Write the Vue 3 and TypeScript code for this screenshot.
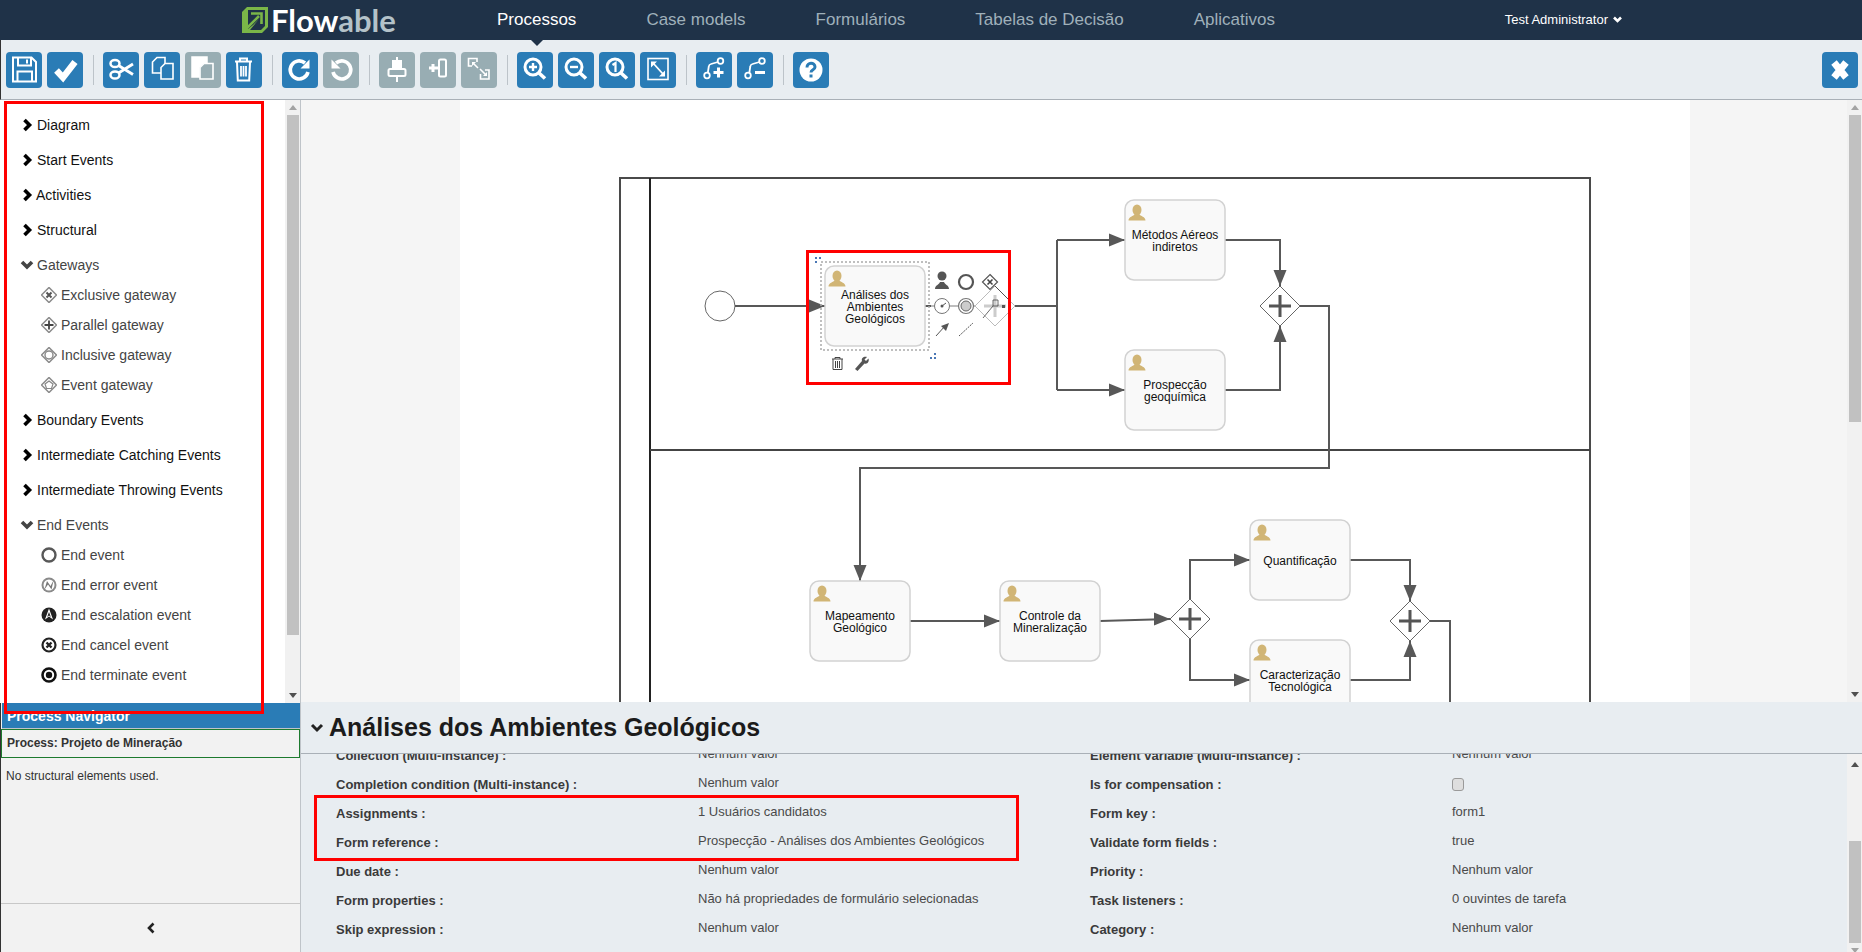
<script setup lang="ts">
interface ToolButton {
  icon: string
  disabled?: boolean
}

const icons: Record<string, string> = {
  save: '<path d="M7 5.500h18.500L30 10v19.500H7z" stroke-width="2"/><path d="M12 6v7.500h13V6M21 7.500v4M11.500 30V19.500H26V30" stroke-width="2"/>',
  check: '<path d="M9.500 18.500l6.500 7 12-15.500" stroke-width="6.500"/>',
  cut: '<ellipse cx="12" cy="11.500" rx="4.500" ry="3.600" stroke-width="2.500"/><ellipse cx="12" cy="23" rx="4.500" ry="3.600" stroke-width="2.500"/><path d="M15.500 13.500L30 22.500M15.500 21L30 12" stroke-width="2.800"/>',
  copy: '<path d="M8.500 21V10l4.500-4.500h8V21z" stroke-width="1.600"/><path d="M17 15.500l4-4h8V27H17z" fill="#2a7cb6" stroke-width="1.600"/>',
  paste: '<path d="M7 5h15v6h-4l-4 4v10H7z" fill="#fff"/><path d="M15 15.500l4-4h9V27H15z" fill="#98adb3" stroke-width="1.600"/>',
  trash: '<path d="M9 9.500h17M14 9V6.500h7V9" stroke-width="2"/><path d="M11 10l.800 18.500h11.400L24 10" stroke-width="2"/><path d="M15 14v10.500M17.500 14v10.500M20 14v10.500" stroke-width="1.800"/>',
  redo: '<path d="M26 20a9 9 0 1 1-3-9" stroke-width="3.600"/><path d="M27.500 7.500v9h-9z" fill="#fff" stroke="none"/>',
  undo: '<path d="M10 20a9 9 0 1 0 3-9" stroke-width="3.600"/><path d="M8.500 7.500v9h9z" fill="#fff" stroke="none"/>',
  alignv: '<path d="M18 5v25" stroke-width="2"/><rect x="14" y="9" width="8" height="6" fill="#fff" stroke-width="2"/><rect x="9.500" y="17" width="17" height="7" rx="1.500" fill="#98adb3" stroke-width="2"/>',
  alignh: '<path d="M9 16h9M13 12v8" stroke-width="3"/><rect x="19" y="7.500" width="7" height="17" rx="1.500" stroke-width="2"/>',
  size: '<path d="M16 10V6.500H7.500V14H11M19.500 22v5h8.500v-9h-4" stroke-width="1.600"/><path d="M12 11l5 5M19 17l6 6" stroke-width="1.600"/><path d="M11 10h4l-4 4zM26 24h-4l4-4z" fill="#fff" stroke="none"/>',
  zoomin: '<circle cx="16" cy="15" r="8" stroke-width="3"/><path d="M22 21l6 5.500" stroke-width="3.600"/><path d="M12 15h8M16 11v8" stroke-width="2.400"/>',
  zoomout: '<circle cx="16" cy="15" r="8" stroke-width="3"/><path d="M22 21l6 5.500" stroke-width="3.600"/><path d="M12 15h8" stroke-width="2.400"/>',
  zoomone: '<circle cx="16" cy="15" r="8" stroke-width="3"/><path d="M22 21l6 5.500" stroke-width="3.600"/><path d="M13.500 13l3-2v9" stroke-width="2.200"/>',
  fit: '<rect x="8" y="6.500" width="20" height="21" stroke-width="1.600"/><path d="M13 11l10 11" stroke-width="1.800"/><path d="M11 9.500h6l-6 6zM25 24.500h-6l6-6z" fill="#fff" stroke="none"/>',
  bendadd: '<circle cx="24.500" cy="9" r="2.800" stroke-width="1.800"/><circle cx="11" cy="23.500" r="2.800" stroke-width="1.800"/><path d="M22 10l-7 2q-2 .5-2.200 2.500l-1 6.500" stroke-width="1.800"/><path d="M17.500 20.500h10M22.500 15.500v10" stroke-width="3"/>',
  bendremove: '<circle cx="25" cy="9" r="2.800" stroke-width="1.800"/><circle cx="11" cy="23.500" r="2.800" stroke-width="1.800"/><path d="M22.500 10l-7 2q-2 .5-2.200 2.500l-1 6.500" stroke-width="1.800"/><path d="M18 20.500h10" stroke-width="3"/>',
  help: '<circle cx="18" cy="18" r="11.500" fill="#fff" stroke="none"/><path d="M14 15.500c0-5.500 8-5.500 8-.5 0 3-4 2.500-4 5.500" stroke="#2a7cb6" stroke-width="3"/><path d="M18 22.500v3" stroke="#2a7cb6" stroke-width="3"/>',
  close: '<path d="M12 10.500l12 15M24 10.500l-12 15" stroke-width="7"/>',
}

const toolGroups: ToolButton[][] = [
  [{ icon: 'save' }, { icon: 'check' }],
  [{ icon: 'cut' }, { icon: 'copy' }, { icon: 'paste', disabled: true }, { icon: 'trash' }],
  [{ icon: 'redo' }, { icon: 'undo', disabled: true }],
  [{ icon: 'alignv', disabled: true }, { icon: 'alignh', disabled: true }, { icon: 'size', disabled: true }],
  [{ icon: 'zoomin' }, { icon: 'zoomout' }, { icon: 'zoomone' }, { icon: 'fit' }],
  [{ icon: 'bendadd' }, { icon: 'bendremove' }],
  [{ icon: 'help' }],
]

const navLinks = ['Processos', 'Case models', 'Formulários', 'Tabelas de Decisão', 'Aplicativos']

const diamond = '<path d="M8 .500l7.500 7.500L8 15.500.500 8z" fill="#fff" stroke="#8a8a8a" stroke-width="1.500"/>'
const palette = [
  { name: 'Diagram', items: [] },
  { name: 'Start Events', items: [] },
  { name: 'Activities', items: [] },
  { name: 'Structural', items: [] },
  {
    name: 'Gateways',
    open: true,
    items: [
      { name: 'Exclusive gateway', icon: diamond + '<path d="M5.500 5.500l5 5M10.500 5.500l-5 5" stroke="#555" stroke-width="2"/>' },
      { name: 'Parallel gateway', icon: diamond + '<path d="M8 3.500v9M3.500 8h9" stroke="#444" stroke-width="1.800"/>' },
      { name: 'Inclusive gateway', icon: diamond + '<circle cx="8" cy="8" r="4" fill="none" stroke="#888" stroke-width="1.400"/>' },
      { name: 'Event gateway', icon: diamond + '<path d="M8 4l4 3-1.500 4.500h-5L4 7z" fill="none" stroke="#888" stroke-width="1.200"/>' },
    ],
  },
  { name: 'Boundary Events', items: [] },
  { name: 'Intermediate Catching Events', items: [] },
  { name: 'Intermediate Throwing Events', items: [] },
  {
    name: 'End Events',
    open: true,
    items: [
      { name: 'End event', icon: '<circle cx="8" cy="8" r="6.500" fill="none" stroke="#585858" stroke-width="2.400"/>' },
      { name: 'End error event', icon: '<circle cx="8" cy="8" r="7.500" fill="#8a8a8a"/><circle cx="8" cy="8" r="5.500" fill="#fff"/><path d="M3.500 12.500l2.500-8.500 3.500 5L12.500 3.500l-2 9-3.500-5z" fill="#777"/>' },
      { name: 'End escalation event', icon: '<circle cx="8" cy="8" r="7.500" fill="#222"/><path d="M8 1.500l4 11-4-3-4 3z" fill="#fff"/><path d="M8 5l1.800 5L8 8.500 6.200 10z" fill="#222"/>' },
      { name: 'End cancel event', icon: '<circle cx="8" cy="8" r="6.500" fill="#fff" stroke="#222" stroke-width="2.200"/><path d="M5.500 5.500l5 5M10.500 5.500l-5 5" stroke="#222" stroke-width="2.400"/>' },
      { name: 'End terminate event', icon: '<circle cx="8" cy="8" r="6.500" fill="#fff" stroke="#111" stroke-width="2.600"/><circle cx="8" cy="8" r="3.200" fill="#111"/>' },
    ],
  },
]

const rows = [
  ['Collection (Multi-instance) :', 'Nenhum valor', 'Element variable (Multi-instance) :', 'Nenhum valor'],
  ['Completion condition (Multi-instance) :', 'Nenhum valor', 'Is for compensation :', ''],
  ['Assignments :', '1 Usuários candidatos', 'Form key :', 'form1'],
  ['Form reference :', 'Prospecção - Análises dos Ambientes Geológicos', 'Validate form fields :', 'true'],
  ['Due date :', 'Nenhum valor', 'Priority :', 'Nenhum valor'],
  ['Form properties :', 'Não há propriedades de formulário selecionadas', 'Task listeners :', '0 ouvintes de tarefa'],
  ['Skip expression :', 'Nenhum valor', 'Category :', 'Nenhum valor'],
]

const tasks = [
  { x: 825, y: 266, lines: ['Análises dos', 'Ambientes', 'Geológicos'], top: 29 },
  { x: 1125, y: 200, lines: ['Métodos Aéreos', 'indiretos'], top: 35 },
  { x: 1125, y: 350, lines: ['Prospecção', 'geoquímica'], top: 35 },
  { x: 810, y: 581, lines: ['Mapeamento', 'Geológico'], top: 35 },
  { x: 1000, y: 581, lines: ['Controle da', 'Mineralização'], top: 35 },
  { x: 1250, y: 520, lines: ['Quantificação'], top: 41 },
  { x: 1250, y: 640, lines: ['Caracterização', 'Tecnológica'], top: 35 },
]

const gateways = [
  { x: 1280, y: 306 },
  { x: 1190, y: 619 },
  { x: 1410, y: 621 },
]

const flows = [
  '735,306 825,306',
  '1015,306 1057,306',
  '1057,240 1057,390',
  '1057,240 1125,240',
  '1057,390 1125,390',
  '1225,240 1280,240 1280,286',
  '1225,390 1280,390 1280,326',
  '1300,306 1329,306 1329,468 860,468 860,581',
  '910,621 1000,621',
  '1100,621 1170,619',
  '1190,599 1190,560 1250,560',
  '1190,639 1190,680 1250,680',
  '1350,560 1410,560 1410,601',
  '1350,680 1410,680 1410,641',
  '1430,621 1450,621 1450,702',
]

// arrow heads: tip position, direction
const arrows: [number, number, string][] = [
  [825, 306, 'r'], [1125, 240, 'r'], [1125, 390, 'r'], [1280, 286, 'd'], [1280, 326, 'u'],
  [860, 581, 'd'], [1000, 621, 'r'], [1170, 619, 'r'], [1250, 560, 'r'], [1250, 680, 'r'],
  [1410, 601, 'd'], [1410, 641, 'u'],
]

function arrowPoints(a: [number, number, string]): string {
  const [x, y, dir] = a
  if (dir === 'r') return `${x},${y} ${x - 16},${y - 6.5} ${x - 16},${y + 6.5}`
  if (dir === 'd') return `${x},${y} ${x - 6.5},${y - 16} ${x + 6.5},${y - 16}`
  return `${x},${y} ${x - 6.5},${y + 16} ${x + 6.5},${y + 16}`
}

function diamondPoints(x: number, y: number, r = 20): string {
  return `${x},${y - r} ${x + r},${y} ${x},${y + r} ${x - r},${y}`
}
</script>

<template>
  <div class="app">
    <header class="topbar">
      <svg class="logo-icon" width="26" height="26" viewBox="0 0 26 26">
        <path d="M5 0h21v20l-6 6H0V5z" fill="#7ab648" />
        <path d="M6 3h17v16l-4 4H8l9-11-6 6-5 4z" fill="#1f3248" />
        <path d="M5 21L17 9M9 6.500h10.500V17" fill="none" stroke="#7ab648" stroke-width="2.600" />
      </svg>
      <span class="logo-text">Flow<span class="logo-soft">able</span></span>
      <nav class="nav">
        <a v-for="(link, i) in navLinks" :key="link" class="nav-link" :class="{ active: i === 0 }">{{ link }}</a>
      </nav>
      <span class="user">
        Test Administrator
        <svg width="9" height="7" viewBox="0 0 9 7"><path d="M1 1.500l3.500 3.500L8 1.500" fill="none" stroke="#fff" stroke-width="2.600" /></svg>
      </span>
    </header>
    <div class="nav-pointer"></div>

    <div class="toolbar">
      <template v-for="(group, g) in toolGroups" :key="g">
        <span v-if="g > 0" class="sep"></span>
        <button v-for="b in group" :key="b.icon" class="tool" :class="{ off: b.disabled }">
          <svg width="36" height="36" viewBox="0 0 36 36" fill="none" stroke="#fff" stroke-width="1.500" v-html="icons[b.icon]"></svg>
        </button>
      </template>
      <button class="tool close">
        <svg width="36" height="36" viewBox="0 0 36 36" fill="none" stroke="#fff" v-html="icons.close"></svg>
      </button>
    </div>

    <div class="main">
      <aside class="side">
        <div class="palette">
          <ul class="groups">
            <li v-for="group in palette" :key="group.name">
              <div class="group" :class="{ open: group.open, tight: group.name === 'Activities' }">
                <svg width="14" height="14" viewBox="0 0 14 14" fill="none" :stroke="group.open ? '#444' : '#000'" stroke-width="3.600">
                  <path v-if="group.open" d="M2 4l5 5 5-5" />
                  <path v-else d="M4.500 2l5 5-5 5" />
                </svg>
                {{ group.name }}
              </div>
              <div v-for="item in group.items" :key="item.name" class="item">
                <svg width="16" height="16" viewBox="0 0 16 16" v-html="item.icon"></svg>
                {{ item.name }}
              </div>
            </li>
          </ul>
          <div class="scrollbar palette-bar">
            <span class="arr up"></span>
            <div class="track"><div class="thumb"></div></div>
            <span class="arr down"></span>
          </div>
        </div>
        <div class="navigator">
          <div class="nav-title">Process Navigator</div>
          <div class="nav-process">Process: Projeto de Mineração</div>
          <div class="nav-empty">No structural elements used.</div>
          <div class="nav-footer">
            <svg width="12" height="12" viewBox="0 0 12 12"><path d="M8.500 1.500L4 6l4.500 4.500" fill="none" stroke="#222" stroke-width="2.600" /></svg>
          </div>
        </div>
      </aside>

      <div class="work">
        <div class="canvas">
          <svg class="diagram" width="1546" height="602" viewBox="301 100 1546 602">
            <rect x="460" y="100" width="1230" height="602" fill="#fff" />

            <!-- pool and lanes -->
            <path d="M620 702V178H1590V702" fill="none" stroke="#4a4a4a" stroke-width="2" />
            <path d="M650 178V702" stroke="#222" stroke-width="2" />
            <path d="M650 450H1590" stroke="#444" stroke-width="2" />

            <circle cx="720" cy="306" r="15" fill="#fff" stroke="#666" />

            <polyline v-for="f in flows" :key="f" :points="f" fill="none" stroke="#585858" stroke-width="2" />
            <polygon v-for="(a, i) in arrows" :key="i" :points="arrowPoints(a)" fill="#585858" />
            <path d="M925 306h6" stroke="#585858" stroke-width="2" />
            <path d="M931 306h44" stroke="#bdbdbd" stroke-width="2" />

            <g v-for="g in gateways" :key="g.x">
              <polygon :points="diamondPoints(g.x, g.y)" fill="#fff" stroke="#666" />
              <path :d="`M${g.x - 11} ${g.y}h22M${g.x} ${g.y - 11}v22`" stroke="#555" stroke-width="3" />
            </g>

            <g v-for="t in tasks" :key="t.x + '-' + t.y">
              <rect :x="t.x" :y="t.y" width="100" height="80" rx="9" fill="#f9f9f9" stroke="#d2d2d2" stroke-width="1.500" />
              <g :transform="`translate(${t.x + 3.5} ${t.y + 4.5})`" fill="#d1b575">
                <ellipse cx="8.500" cy="5.500" rx="4.500" ry="5.500" />
                <path d="M0 16c0-4 5-4 6.500-6.500h4C12 12 17 12 17 16z" />
              </g>
              <text v-for="(line, i) in t.lines" :key="line" class="task-label" :x="t.x + 50" :y="t.y + t.top + i * 12 + 4">{{ line }}</text>
            </g>

            <!-- selection around the active task -->
            <rect x="821" y="262" width="108" height="88" fill="none" stroke="#aaa" stroke-width="1.500" stroke-dasharray="2 2" />
            <path d="M815 257h2v2h-2zM819 257h2v2h-2zM815 261h2v2h-2z" fill="#4a77b5" />
            <path d="M934 353h2v2h-2zM930 357h2v2h-2zM934 357h2v2h-2z" fill="#4a77b5" />

            <!-- ghost gateway of the quick menu -->
            <polygon :points="diamondPoints(995, 306)" fill="#fff" fill-opacity=".85" stroke="#bbb" />
            <path d="M995 286l15 15" stroke="#333" stroke-width=".8" />
            <path d="M984 306h22M995 295v22" stroke="#ccc" stroke-width="3" />
            <path d="M983 318l10-12v-6h5v6h-5" fill="none" stroke="#444" stroke-width=".8" />
            <rect x="1002" y="305" width="3" height="3" fill="#555" />

            <!-- quick menu icons -->
            <g>
              <circle cx="942" cy="276" r="4.500" fill="#555" />
              <path d="M935 289c0-4 4-4 5-7h4c1 3 5 3 5 7z" fill="#555" />
              <circle cx="966" cy="282" r="7" fill="#fff" stroke="#555" stroke-width="2.200" />
              <polygon :points="diamondPoints(990, 282, 7.5)" fill="#fff" stroke="#555" stroke-width="1.200" />
              <path d="M987.500 279.500l5 5M992.500 279.500l-5 5" stroke="#444" stroke-width="1.600" />
              <circle cx="942" cy="306" r="7.500" fill="#fff" stroke="#777" />
              <path d="M942 306l4-3" stroke="#555" /><circle cx="942" cy="306" r="1.500" fill="#555" />
              <circle cx="966" cy="306" r="7.500" fill="#fff" stroke="#777" stroke-width="1.200" />
              <circle cx="966" cy="306" r="5" fill="#ccc" stroke="#666" />
              <path d="M936 336l9-10" stroke="#555" />
              <path d="M949 323l-8 3 5 5z" fill="#555" />
              <path d="M959 336l14-13" stroke="#555" stroke-dasharray="2 1" />
            </g>
            <!-- delete and morph -->
            <g fill="none" stroke="#444" stroke-width="1">
              <path d="M832 359h11M835 359v-1.500h5v1.500M833 359v10.500h9V359M835.500 361v7M837.500 361v7M839.500 361v7" />
            </g>
            <path d="M855 369l7-8c-1-3 2-5 5-4l-2.500 2.500 1.500 1.500 2.500-2.500c1 3-1 6-4 5l-7 7.500z" fill="#555" />
          </svg>
          <div class="scrollbar canvas-bar">
            <span class="arr up"></span>
            <div class="track"><div class="thumb"></div></div>
            <span class="arr down"></span>
          </div>
        </div>

        <section class="panel">
          <h2 class="panel-title">
            <svg width="14" height="12" viewBox="0 0 14 12"><path d="M2 3l5 5 5-5" fill="none" stroke="#222" stroke-width="3" /></svg>
            Análises dos Ambientes Geológicos
          </h2>
          <div class="panel-body">
            <div class="props">
              <template v-for="row in rows" :key="row[0]">
                <div class="prop-label">{{ row[0] }}</div>
                <div class="prop-value">{{ row[1] }}</div>
                <div class="prop-label">{{ row[2] }}</div>
                <div class="prop-value">
                  <input v-if="row[2] === 'Is for compensation :'" type="checkbox" class="check" />
                  <template v-else>{{ row[3] }}</template>
                </div>
              </template>
            </div>
            <div class="scrollbar panel-bar">
              <span class="arr up"></span>
              <div class="track"><div class="thumb"></div></div>
              <span class="arr down"></span>
            </div>
          </div>
        </section>
      </div>
    </div>

    <!-- annotation boxes drawn over the screenshot -->
    <div class="mark mark-palette"></div>
    <div class="mark mark-task"></div>
    <div class="mark mark-props"></div>
  </div>
</template>

<style>
body {
  margin: 0;
  overflow: hidden;
}
</style>

<style scoped>
.app {
  position: relative;
  width: 1862px;
  height: 952px;
  overflow: hidden;
  display: flex;
  flex-direction: column;
  font-family: "Liberation Sans", Arial, sans-serif;
  color: #333;
  background: #fff;
}

.topbar {
  height: 40px;
  flex: none;
  display: flex;
  align-items: center;
  padding: 0 240px 0 242px;
  background: #1f3248;
}

.logo-icon {
  flex: none;
}

.logo-text {
  margin-left: 3px;
  width: 127px;
  font-family: Lato, sans-serif;
  font-size: 31px;
  font-weight: 700;
  color: #fff;
}

.logo-soft {
  color: #b4c2c9;
}

.nav {
  display: flex;
  gap: 70px;
  margin-left: 99px;
}

.nav-link {
  font-size: 17px;
  color: #9fb0ba;
}

.nav-link.active {
  color: #fff;
}

.user {
  margin-left: auto;
  padding-bottom: 2px;
  display: flex;
  align-items: center;
  gap: 5px;
  font-size: 13px;
  color: #fff;
}

.nav-pointer {
  position: absolute;
  left: 531px;
  top: 40px;
  width: 0;
  height: 0;
  border-left: 6px solid transparent;
  border-right: 6px solid transparent;
  border-top: 6px solid #1f3248;
  z-index: 2;
}

.toolbar {
  height: 60px;
  flex: none;
  box-sizing: border-box;
  display: flex;
  align-items: center;
  gap: 5px;
  padding: 1px 4px 0 5px;
  background: #e8edf1;
  border-left: 1px solid #333;
  border-bottom: 1px solid #a9b0b7;
}

.tool {
  width: 36px;
  height: 36px;
  padding: 0;
  border: 0;
  border-radius: 4px;
  background: #2a7cb6;
}

.tool svg {
  display: block;
}

.tool.off {
  background: #98adb3;
}

.tool.close {
  margin-left: auto;
}

.sep {
  width: 1px;
  height: 30px;
  margin: 0 4px 0 5px;
  background: #bcc3c9;
}

.main {
  flex: 1;
  display: flex;
  min-height: 0;
}

.side {
  width: 301px;
  flex: none;
  box-sizing: border-box;
  display: flex;
  flex-direction: column;
  border-right: 1px solid #bfc4c9;
}

.palette {
  height: 603px;
  flex: none;
  display: flex;
  background: #fff;
}

.groups {
  flex: 1;
  margin: 0;
  padding: 7px 0 0 20px;
  list-style: none;
  font-size: 14px;
}

.group {
  height: 35px;
  display: flex;
  align-items: center;
  gap: 3px;
  color: #111;
}

.group.tight {
  gap: 2px;
}

.group.open {
  color: #444;
}

.item {
  height: 30px;
  display: flex;
  align-items: center;
  gap: 4px;
  padding-left: 21px;
  color: #444;
}

.group + .item {
  margin-top: -2px;
}

.item:last-child {
  margin-bottom: 2px;
}

.scrollbar {
  width: 15px;
  flex: none;
  box-sizing: border-box;
  display: flex;
  flex-direction: column;
  align-items: center;
  background: #f1f1f1;
}

.arr {
  flex: none;
  width: 0;
  height: 0;
  margin: 5px 0;
  border-left: 4px solid transparent;
  border-right: 4px solid transparent;
}

.arr.up {
  border-bottom: 5px solid #a3a3a3;
}

.arr.down {
  border-top: 5px solid #505050;
}

.track {
  flex: 1;
  width: 100%;
}

.thumb {
  width: 12px;
  margin: 0 auto;
  background: #c1c1c1;
}

.palette-bar .thumb {
  height: 520px;
}

.canvas-bar .thumb {
  height: 307px;
}

.panel-bar {
  padding-top: 3px;
}

.panel-bar .track {
  padding-top: 69px;
}

.panel-bar .thumb {
  height: 102px;
}

.panel-bar .arr.up {
  border-bottom-color: #505050;
}

.panel-bar .arr.down {
  border-top-color: #a3a3a3;
}

.navigator {
  flex: 1;
  display: flex;
  flex-direction: column;
  background: #f2f2f2;
  border-left: 1px solid #333;
  font-size: 12px;
}

.nav-title {
  height: 25px;
  flex: none;
  margin-left: 1px;
  padding-left: 5px;
  line-height: 27px;
  font-size: 14px;
  font-weight: bold;
  color: #fff;
  background: #2a7cb6;
  border-bottom: 1px solid #bfc4c9;
}

.nav-process {
  height: 29px;
  flex: none;
  box-sizing: border-box;
  padding-left: 5px;
  line-height: 27px;
  font-weight: bold;
  border: 1px solid #1d7a2e;
}

.nav-empty {
  flex: 1;
  padding: 11px 0 0 5px;
}

.nav-footer {
  height: 49px;
  flex: none;
  box-sizing: border-box;
  display: flex;
  align-items: center;
  justify-content: center;
  border-top: 1px solid #c8c8c8;
}

.work {
  flex: 1;
  min-width: 0;
  display: flex;
  flex-direction: column;
}

.canvas {
  height: 602px;
  flex: none;
  display: flex;
  background: #f5f5f5;
}

.diagram {
  display: block;
}

.task-label {
  font-size: 12px;
  text-anchor: middle;
  fill: #111;
}

.panel {
  flex: 1;
  min-height: 0;
  display: flex;
  flex-direction: column;
  background: #e8edf1;
}

.panel-title {
  height: 52px;
  flex: none;
  box-sizing: border-box;
  margin: 0;
  padding-left: 9px;
  display: flex;
  align-items: center;
  gap: 5px;
  font-size: 25px;
  font-weight: bold;
  color: #1b1b1b;
  border-bottom: 1px solid #a9b0b7;
}

.panel-body {
  flex: 1;
  min-height: 0;
  display: flex;
  overflow: hidden;
}

.props {
  flex: 1;
  display: grid;
  grid-template-columns: 362px 392px 362px 1fr;
  grid-auto-rows: 29px;
  align-content: start;
  align-items: center;
  margin-top: -13px;
  padding-left: 35px;
  font-size: 13px;
}

.prop-label {
  font-weight: bold;
  color: #3a3a3a;
}

.prop-value {
  padding-bottom: 4px;
  color: #4a4a4a;
}

.check {
  display: block;
  appearance: none;
  width: 12px;
  height: 13px;
  margin: 4px 0 0;
  background: #dedede;
  border: 1px solid #9a9a9a;
  border-radius: 3px;
}

.mark {
  position: absolute;
  box-sizing: border-box;
  border: 3px solid #f00;
  z-index: 3;
}

.mark-palette {
  left: 4px;
  top: 101px;
  width: 260px;
  height: 613px;
}

.mark-task {
  left: 806px;
  top: 250px;
  width: 205px;
  height: 135px;
}

.mark-props {
  left: 314px;
  top: 795px;
  width: 705px;
  height: 66px;
}
</style>
